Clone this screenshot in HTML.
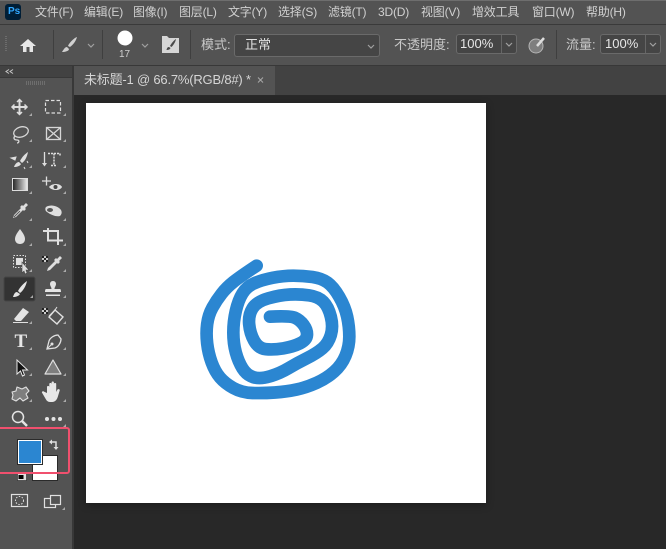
<!DOCTYPE html>
<html><head><meta charset="utf-8">
<style>
html,body{margin:0;padding:0;background:#282828}
#r{position:relative;width:666px;height:549px;overflow:hidden;background:#282828;font-family:"Liberation Sans","Noto Sans CJK SC",sans-serif;font-size:12px;color:#d0d0d0}
#r div,#r span{position:absolute;white-space:nowrap}
.m{top:4px;line-height:16px;letter-spacing:-.2px}
.o{line-height:16px;font-size:13px;color:#c8c8c8}
.b{background:#454545;border:1px solid #6a6a6a;border-radius:3px;box-sizing:border-box}
svg{position:absolute;left:0;top:0}
</style></head><body><div id="r">
<div style="left:0;top:0;width:666px;height:24px;background:#535353;border-top:1px solid #6e6e6e;box-sizing:border-box"></div>
<div style="left:0;top:24px;width:666px;height:1px;background:#3a3a3a"></div>
<div style="left:0;top:25px;width:666px;height:40px;background:#535353"></div>
<div style="left:0;top:65px;width:666px;height:1px;background:#383838"></div>
<div style="left:0;top:66px;width:666px;height:29px;background:#424242"></div>
<div style="left:5px;top:4px;width:16px;height:16px;background:#001e36;border-radius:3px"></div>
<div style="left:8px;top:5px;font-size:10px;font-weight:bold;color:#31a8ff;line-height:14px">Ps</div>
<div class="m" style="left:35px">文件(F)</div>
<div class="m" style="left:84px">编辑(E)</div>
<div class="m" style="left:133px">图像(I)</div>
<div class="m" style="left:179px">图层(L)</div>
<div class="m" style="left:228px">文字(Y)</div>
<div class="m" style="left:278px">选择(S)</div>
<div class="m" style="left:328px">滤镜(T)</div>
<div class="m" style="left:378px">3D(D)</div>
<div class="m" style="left:421px">视图(V)</div>
<div class="m" style="left:472px">增效工具</div>
<div class="m" style="left:532px">窗口(W)</div>
<div class="m" style="left:586px">帮助(H)</div>

<div style="left:0;top:66px;width:72px;height:483px;background:#535353"></div>
<div style="left:0;top:66px;width:72px;height:11px;background:#424242"></div>
<div style="left:72px;top:66px;width:2px;height:483px;background:#383838"></div>
<div style="left:74px;top:66px;width:201px;height:29px;background:#535353"></div>
<div style="left:74px;top:95px;width:592px;height:454px;background:#282828"></div>
<div style="left:0;top:77px;width:72px;height:1px;background:#383838"></div>
<div style="left:84px;top:71px;font-size:13px;line-height:18px;color:#d6d6d6;letter-spacing:-.2px">未标题-1 @ 66.7%(RGB/8#) *</div>
<div style="left:86px;top:103px;width:400px;height:400px;background:#fff;box-shadow:0 2px 8px rgba(0,0,0,.3)"></div>

<div class="o" style="left:201px;top:37px">模式:</div>
<div class="b" style="left:234px;top:34px;width:146px;height:23px"></div>
<div class="o" style="left:245px;top:37px;color:#e0e0e0">正常</div>
<div class="o" style="left:394px;top:37px">不透明度:</div>
<div class="b" style="left:456px;top:34px;width:61px;height:20px"></div>
<div class="o" style="left:460px;top:36px;font-size:13px;color:#e6e6e6">100%</div>
<div class="o" style="left:566px;top:37px">流量:</div>
<div class="b" style="left:600px;top:34px;width:61px;height:20px"></div>
<div class="o" style="left:605px;top:36px;font-size:13px;color:#e6e6e6">100%</div>
<div style="left:119px;top:48px;font-size:10px;line-height:14px;color:#cfcfcf">17</div>

<svg width="666" height="549" viewBox="0 0 666 549">
<defs><linearGradient id="g"><stop offset="0" stop-color="#222"/><stop offset="1" stop-color="#eee"/></linearGradient></defs>
<!-- options bar -->
<g stroke="#3f3f3f" fill="none">
<path d="M53.500 30v29M102.500 30v29M190.500 30v29M556.500 30v29"/>
</g>
<g stroke="#666" fill="none"><path d="M501.500 35v18M645.500 35v18"/></g>
<path d="M5 36.500h2M5 38.500h2M5 40.500h2M5 42.500h2M5 44.500h2M5 46.500h2M5 48.500h2M5 50.500h2" stroke="#6c6c6c"/>
<path d="M20 46l8-7 8 7h-3v6h-3.500v-5h-3v5H23v-6z" fill="#e6e6e6"/>
<path d="M77 37c-3 1-8 6-9 9l2 1c3-2 6-6 7-10zM67 47c-2 0-3 2-5 5 3 0 7-1 7-3z" fill="#d0d0d0"/>
<g fill="none" stroke="#a0a0a0" stroke-width="1.200"><path d="M88 44l3 3 3-3M142 44l3 3 3-3"/><path d="M368 45l3 3 3-3M506 43l3 3 3-3M650 43l3 3 3-3"/></g>
<circle cx="125" cy="38" r="7.500" fill="#fff"/>
<path d="M162 36h5l2 2h10v15h-17z" fill="#d6d6d6"/><path d="M176 39c-2 1-5 5-6 7l1.500 1c2-2 4-5 4.500-8zM169 47c-1.500 0-2 1-2.500 3 2 0 3.500-.5 4-2z" fill="#4a4a4a"/>
<circle cx="536" cy="46" r="7" fill="#7e7e7e" stroke="#b5b5b5"/><path d="M537 46l7-8" stroke="#ddd" stroke-width="2.500"/>

<!-- panel -->
<path d="M9 69.500l-3 2 3 2M13 69.500l-3 2 3 2" stroke="#c8c8c8" fill="none"/>
<path d="M26.500 81v4M28.500 81v4M30.500 81v4M32.500 81v4M34.500 81v4M36.500 81v4M38.500 81v4M40.500 81v4M42.500 81v4M44.500 81v4" stroke="#6e6e6e"/>

<rect x="4" y="277" width="31" height="24" rx="2" fill="#333" stroke="#444"/>

<!-- row1 -->
<g fill="none" stroke="#dedede" stroke-width="2">
<path d="M19.500 100v14M12.500 107h14" /><path d="M17 102l2.500-2.500 2.500 2.500M17 112l2.500 2.500 2.500-2.500M14.500 104.500L12 107l2.500 2.500M24.500 104.500L27 107l-2.500 2.500" stroke-width="1.500"/>
</g>
<rect x="45.500" y="100.500" width="15" height="12.500" fill="none" stroke="#dedede" stroke-width="1.200" stroke-dasharray="3.500 2"/>
<!-- lasso / frame -->
<g fill="none" stroke="#d6d6d6" stroke-width="1.300">
<ellipse cx="21" cy="132" rx="7.500" ry="5" transform="rotate(-18 21 132)"/><path d="M15 136c-2 2-1 4 2 4s2 3 0 3"/>
<rect x="46.500" y="127.500" width="14" height="12"/><path d="M46.500 127.500l14 12M60.500 127.500l-14 12"/>
</g>
<!-- quick select / type on path -->
<path d="M28 152c-3 2-6 5-8 9l2 2c3-2 5-6 6-11zM19 162c-2 0-4 2-5 5 3 0 6-1 7-3z" fill="#dedede"/><path d="M11 158l5-1-1 3zM24 167l1 2M27 161l1 2" stroke="#dedede" fill="#dedede"/>
<path d="M44.500 152v13" stroke="#dedede" fill="none" stroke-width="1.300"/><path d="M42 163l2.500 3.500 2.500-3.500z" fill="#dedede"/><path d="M48 153.500h12v3M54 153.500v12M51 165.500h6" stroke="#dedede" fill="none" stroke-dasharray="2 1" stroke-width="1.500"/>
<!-- gradient / eye -->
<rect x="12.500" y="178.500" width="15" height="12" fill="url(#g)" stroke="#ddd"/>
<path d="M42 181h9M46.500 176.500v9" stroke="#dedede" stroke-width="1.300"/><path d="M49 187c3-4 11-4 13 0-2 4-10 4-13 0z" fill="#dedede"/><circle cx="55.500" cy="187" r="2" fill="#444"/>
<!-- eyedropper / patch -->
<path d="M26 203l2 2-3 3 1 1-2 2-1-1-7 7-3 1 1-3 7-7-1-1 2-2 1 1z" fill="#dedede"/><path d="M14 217l6-6" stroke="#555" stroke-width="1"/>
<path d="M46 207c5-3 12-1 15 3 1 2 1 4-1 6-4 1-9-1-13-4-2-1-2-4-1-5z" fill="#dedede"/><ellipse cx="50" cy="210" rx="3" ry="2" fill="#555"/>
<!-- drop / crop -->
<path d="M20 229c3 4 5 7 5 10 0 3-2 5-5 5s-5-2-5-5c0-3 2-6 5-10z" fill="#e0e0e0"/>
<path d="M43 231H58V245M48 228V240.500H63" fill="none" stroke="#e0e0e0" stroke-width="2"/>
<!-- select subject / sampler -->
<rect x="13.500" y="255.500" width="12" height="12" fill="none" stroke="#e0e0e0" stroke-dasharray="1.500 1.500"/><rect x="16" y="258" width="7" height="7" fill="#e0e0e0"/>
<path d="M22 262l7 8-3 0 1 3-2 1-1-3-2 2z" fill="#e0e0e0" stroke="#444" stroke-width=".6"/>
<rect x="42" y="256" width="6" height="6" fill="#ccc"/><path d="M42 256h2v2h-2zM44 258h2v2h-2zM46 256h2v2h-2zM42 260h2v2h-2zM46 260h2v2h-2z" fill="#222"/>
<path d="M60 256l2 2-3 3 1 1-2 2-1-1-7 7-3 1 1-3 7-7-1-1 2-2 1 1z" fill="#dedede"/>
<!-- brush / stamp -->
<path d="M27 281c-3 2-7 6-9 10l2 2c3-2 6-7 7-12zM17 292c-2 0-3 2-4 5 3 0 6-1 7-3z" fill="#e4e4e4"/>
<path d="M53 281c-2 0-3 1.500-3 3 0 2 1.500 3 1.500 5H46c-1 0-1 3-1 3h16s0-3-1-3h-5.500c0-2 1.500-3 1.500-5 0-1.500-1-3-3-3z M46 294.500h14v1.500H46z" fill="#e4e4e4"/>
<!-- eraser / bucket -->
<path d="M23 308l6 4-8 9h-5l-2-2z" fill="#e4e4e4"/><path d="M13 322.500h15" stroke="#e0e0e0"/>
<rect x="42" y="308" width="6" height="6" fill="#ccc"/><path d="M42 308h2v2h-2zM44 310h2v2h-2zM46 308h2v2h-2zM42 312h2v2h-2zM46 312h2v2h-2z" fill="#222"/>
<path d="M55 310l8 7-6 7-8-7z" fill="none" stroke="#e0e0e0" stroke-width="1.400"/><path d="M49 316l6-6 2-3" stroke="#e0e0e0" fill="none"/>
<!-- T / pen -->
<text x="14.500" y="347" style="font-family:'Liberation Serif',serif;font-size:19px;font-weight:bold" fill="#e6e6e6">T</text>
<path d="M58 335l3 4c0 4-3 8-6 9l-8 1 2-8c1-3 5-6 9-6z" fill="none" stroke="#e0e0e0" stroke-width="1.300"/><circle cx="52" cy="344" r="1.500" fill="#e0e0e0"/><path d="M47 349l4-4" stroke="#e0e0e0"/>
<!-- arrow / triangle -->
<path d="M17 360v14l3.500-3 2 5 2-1-2-5 5 0z" fill="#111" stroke="#e8e8e8" stroke-width="1"/>
<path d="M53 360l8 14H45z" fill="#7e7e7e" stroke="#e0e0e0" stroke-width="1.200" stroke-linejoin="round"/>
<!-- star shape / hand -->
<path d="M17 387l5 2 4-2 3 4-3 3 2 4-5 3-3-3-4 3-4-2 1-4-1-3 4-1z" fill="#7e7e7e" stroke="#e0e0e0" stroke-width="1.100" stroke-linejoin="round"/>
<path d="M47 393v-6c0-1.300 2.300-1.300 2.300 0v3-6c0-1.300 2.300-1.300 2.300 0v5-6.500c0-1.300 2.300-1.300 2.300 0V389v-5c0-1.300 2.300-1.300 2.300 0v6l0 2 1-2c.5-1.500 3-1 2.500.5l-1.500 5c-1 4-3 6.500-6 6.500h-2c-2 0-3.500-1-4.500-3l-3.500-6c-1-1.300 1-2.500 2-1.300z" fill="#e8e8e8"/>
<!-- zoom / more -->
<circle cx="18" cy="417" r="5.500" fill="none" stroke="#e4e4e4" stroke-width="1.500"/><path d="M22 421l5 5" stroke="#e4e4e4" stroke-width="2.500"/>
<circle cx="47" cy="419" r="2" fill="#e4e4e4"/><circle cx="53.500" cy="419" r="2" fill="#e4e4e4"/><circle cx="60" cy="419" r="2" fill="#e4e4e4"/>
<!-- corner marks -->
<g fill="#aaa">
<path d="M32 113v3h-3z"/><path d="M66 113v3h-3zM32 139v3h-3zM66 139v3h-3zM32 165v3h-3zM66 165v3h-3zM32 191v3h-3zM66 191v3h-3zM32 218v3h-3zM66 218v3h-3zM32 243v3h-3zM66 243v3h-3zM32 269v3h-3zM66 269v3h-3zM33 295v3h-3zM66 295v3h-3zM32 321v3h-3zM66 321v3h-3zM32 347v3h-3zM66 347v3h-3zM32 373v3h-3zM66 373v3h-3zM32 399v3h-3zM66 399v3h-3zM66 424v3h-3zM65 507v3h-3z"/>
</g>
<!-- swatches -->
<path d="M50 442h6v6" fill="none" stroke="#e0e0e0" stroke-width="1.500"/><path d="M52 439.500l-3 2.500 3 2.500zM53.500 447h5l-2.500 3z" fill="#e0e0e0"/>
<rect x="17.500" y="472.500" width="9" height="8" fill="#e0e0e0" stroke="#2a2a2a" stroke-width=".6"/><rect x="18.500" y="475" width="5" height="4" fill="#000"/>
<rect x="32.500" y="455.500" width="25" height="25" fill="#fff" stroke="#2a2a2a"/>
<rect x="17.500" y="439.500" width="25" height="25" fill="#fff" stroke="#2a2a2a"/>
<rect x="19" y="441" width="22" height="22" fill="#2b86d1"/>
<path d="M-2 428H67a2 2 0 0 1 2 2v41a2 2 0 0 1-2 2H-2" fill="none" stroke="#f0506e" stroke-width="2"/>
<!-- modes -->
<rect x="11.500" y="494.500" width="16" height="12" fill="none" stroke="#e0e0e0" stroke-width="1.200"/><circle cx="19.500" cy="500.500" r="4" fill="none" stroke="#e0e0e0" stroke-dasharray="1.500 1.500"/>
<rect x="44.500" y="498.500" width="11" height="9" fill="#535353" stroke="#e0e0e0" stroke-width="1.200"/><rect x="50.500" y="495.500" width="10" height="9" fill="#535353" stroke="#e0e0e0" stroke-width="1.200"/>
<!-- tab x -->
<path d="M258 77.500l5 5M263 77.500l-5 5" stroke="#a8a8a8"/>
<!-- spiral -->
<g transform="translate(190 250) scale(.33333)">
<path d="M200 47Q150 80 130 96Q110 112 95 131Q80 150 67.500 172.500Q55 195 51.500 222.500Q48 250 51.500 280Q55 310 65 337.500Q75 365 90 382.500Q105 400 130 414Q155 428 187.500 429Q220 430 255 427.500Q290 425 320 418.500Q350 412 380 398.500Q410 385 432.500 365Q455 345 466.500 317.500Q478 290 478 260Q478 230 471.500 200Q465 170 447.500 140Q430 110 412.500 97.500Q395 85 367.500 81Q340 77 310 77Q280 77 247.500 83.500Q215 90 192.500 100Q170 110 157.500 130Q145 150 137.500 182.500Q130 215 130 247.500Q130 280 137.500 307.500Q145 335 157.500 355Q170 375 190 381.500Q210 388 240 379Q270 370 295 355Q320 340 350 325Q380 310 397.500 295Q415 280 422.500 255Q430 230 422.500 200Q415 170 400 155Q385 140 357.500 136Q330 132 300 133.500Q270 135 235 145Q200 155 187.500 175Q175 195 177.500 222.500Q180 250 192.500 272.500Q205 295 227.500 297.500Q250 300 280 295Q310 290 330 280Q350 270 351 255Q352 240 341 225Q330 210 315 203.500Q300 197 240 200" fill="none" stroke="#2b86d1" stroke-width="38" stroke-linecap="round" stroke-linejoin="round"/>
</g>
</svg>
</div></body></html>
